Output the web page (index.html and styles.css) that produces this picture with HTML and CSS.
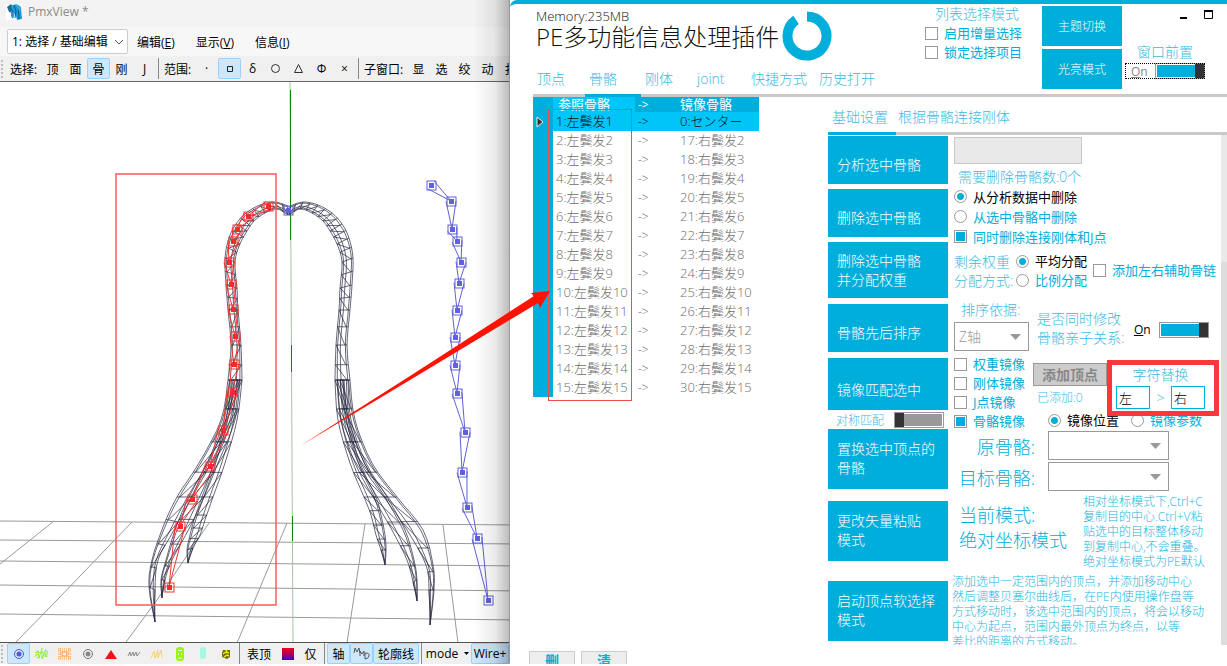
FILE: index.html
```html
<!DOCTYPE html>
<html lang="zh-CN">
<head>
<meta charset="utf-8">
<title>PmxView</title>
<link rel="stylesheet" href="styles.css">
</head>
<body>
<div class="desktop">
  <section class="viewer">
    <header class="titlebar">
      <svg class="app-icon" width="16" height="16" viewBox="0 0 16 16"><rect width="16" height="16" fill="#fff"/><path d="M1 3L5 0 8 4 6 9 3 8z" fill="#1b6f94"/><path d="M5 2Q11-2 15 3L16 15 11 16 9 9 7 15 5 12z" fill="#1c9ad6"/><path d="M8 1L10 7 9 14M12 2L13 15M4 3L7 8" stroke="#135a86" fill="none"/><path d="M10 1Q13 1 14 4L14 8z" fill="#46b5e8"/></svg>
      <span>PmxView *</span>
    </header>
    <nav class="menubar">
      <label class="mode-pick">
        <select aria-label="模式"><option>1: 选择 / 基础编辑</option></select>
        <svg width="10" height="6" viewBox="0 0 10 6"><path d="M1 1L5 5 9 1" fill="none" stroke="#555"/></svg>
      </label>
      <button>编辑(<u>E</u>)</button>
      <button>显示(<u>V</u>)</button>
      <button>信息(<u>I</u>)</button>
    </nav>
    <div class="toolbar tools-top">
      <i class="grip"></i>
      <span class="tool-label">选择:</span>
      <button>顶</button><button>面</button><button class="on">骨</button><button>刚</button><button>J</button>
      <i class="sep"></i>
      <span class="tool-label">范围:</span>
      <button>·</button>
      <button class="on" aria-label="矩形"><svg width="8" height="8"><path d="M1.500 1.500H6.500V6.500H1.500z" fill="none" stroke="#222"/></svg></button>
      <button>δ</button>
      <button aria-label="圆形"><svg width="11" height="11"><circle cx="5.500" cy="5.500" r="4" fill="none" stroke="#333"/></svg></button>
      <button aria-label="三角形"><svg width="11" height="11"><path d="M5.500 1.500L9.500 9.500H1.500z" fill="none" stroke="#333"/></svg></button>
      <button>Φ</button><button>×</button>
      <i class="sep"></i>
      <span class="tool-label wide">子窗口:</span>
      <button>显</button><button>选</button><button>绞</button><button>动</button><button>扌</button>
    </div>
    <div class="stage">
      <svg class="scene" width="100%" height="100%" aria-label="模型视图">
        <g transform="translate(0 -82)">
          <g class="grid-lines">
            <path d="M0 521L520 525M0 540L520 544M0 561L520 566M0 585L520 591M0 614L520 620"/>
            <path d="M54 521L-60 612M132 522L57 600 16 642M209 523L157 600 126 642M287 523L237 643M365 524L347 643M443 525L458 643"/>
          </g>
          <path class="axis" d="M290 82L293 643"/>
          <path class="axis-strong" d="M290.500 90V240M291.500 345V372M292.500 516V541"/>
          <g id="mesh" class="mesh"></g>
          <g id="bones-left" class="bones red"></g>
          <g id="bones-right" class="bones blue"></g>
          <rect class="lasso" x="116" y="174" width="160" height="431"/>
        </g>
      </svg>
    </div>
    <div class="toolbar tools-bottom">
      <i class="grip"></i>
      <button class="on" aria-label="骨骼"><svg width="12" height="12"><circle cx="6" cy="6" r="4.500" fill="none" stroke="#5558d8"/><circle cx="6" cy="6" r="2.500" fill="#5558d8"/></svg></button>
      <button aria-label="顶点"><svg width="15" height="13"><path d="M1 10L4 3 5 11 8 1 8 12 12 2 11 10 14 4M1 5L14 7M2 8L13 4M3 11L14 9" stroke="#8df02c" stroke-dasharray="3 1" fill="none"/></svg></button>
      <button aria-label="面"><svg width="15" height="14"><path d="M1 2H14M1 4H14M1 7H5M9 7H14M1 10H14M1 12H14M3 1V13M12 1V13" stroke="#ff9a3a" stroke-dasharray="1 1" fill="none"/><rect x="5" y="5" width="5" height="4" fill="none" stroke="#ff9a3a"/></svg></button>
      <button aria-label="中心"><svg width="12" height="12"><circle cx="6" cy="6" r="4.500" fill="none" stroke="#777"/><circle cx="6" cy="6" r="2.500" fill="#888"/></svg></button>
      <button aria-label="三角"><svg width="12" height="12"><path d="M6 2L12 11H0z" fill="#f31212"/></svg></button>
      <button aria-label="法线"><svg width="14" height="8"><path d="M1 6L3 2 4 6 6 2 7 6 9 2 10 6 13 2" stroke="#8a8a8a" fill="none"/></svg></button>
      <button aria-label="边线"><svg width="14" height="10"><path d="M1 9L4 2 5 9 8 1 8 9 11 1 12 9" stroke="#ffce70" fill="none"/></svg></button>
      <button aria-label="刚体"><svg width="8" height="14"><rect width="8" height="14" rx="3" fill="#9cf50f"/><path d="M2 3.500H6M2.500 6V8M5.500 6V8M2 11H6" stroke="#effdd5"/></svg></button>
      <button aria-label="胶囊"><svg width="7" height="13"><rect x="1" width="6" height="12" rx="3" fill="#a5f8e2"/></svg></button>
      <button aria-label="J点"><svg width="10" height="10"><path d="M2 1H9V8L6 10 1 8V4z" fill="#736f00"/><path d="M2 5L5 3 8 4M3 8L6 6 8 7M5 1L6 3" stroke="#f1e72b" stroke-width="1.500" fill="none"/></svg></button>
      <i class="sep"></i>
      <button class="w-text">表顶</button>
      <button aria-label="颜色"><svg width="12" height="12"><defs><linearGradient id="rb" x2="0" y2="1"><stop stop-color="#f00020"/><stop offset=".5" stop-color="#b00050"/><stop offset="1" stop-color="#3500d8"/></linearGradient></defs><rect width="12" height="12" fill="url(#rb)"/></svg></button>
      <button>仅</button>
      <i class="sep"></i>
      <button class="on">轴</button>
      <button class="on" aria-label="MMD"><svg width="18" height="14"><path d="M1 6L2 1 4 5 6 1 7 6M7 9V4L9 7 11 4V9M12 12V6Q17 6 16 9T12 12z" stroke="#555" fill="none"/></svg></button>
      <button class="on w-text">轮廓线</button>
      <i class="sep"></i>
      <button class="w-mode">mode <svg width="5" height="3"><path d="M0 0H5L2.500 3z"/></svg></button>
      <button class="on w-wire">Wire+</button>
    </div>
  </section>

  <section class="plugin">
    <header class="head">
      <div class="head-main">
        <div class="brand">
          <div>
            <div class="memory">Memory:235MB</div>
            <h1>PE多功能信息处理插件</h1>
          </div>
          <svg class="ring" width="50" height="50" viewBox="0 0 50 50"><path d="M25 5.500A19.500 19.500 0 1 1 14.100 8.800" fill="none" stroke="#00aedb" stroke-width="10"/></svg>
        </div>
        <nav class="tabs">
          <a href="#v">顶点</a><a href="#b" class="active">骨骼</a><a href="#r">刚体</a><a href="#j">joint</a><a href="#q">快捷方式</a><a href="#h">历史打开</a>
        </nav>
      </div>
      <fieldset class="list-mode">
        <legend>列表选择模式</legend>
        <label><input type="checkbox">启用增量选择</label>
        <label><input type="checkbox">锁定选择项目</label>
      </fieldset>
      <div class="theme-buttons">
        <button>主题切换</button>
        <button>光亮模式</button>
      </div>
      <div class="window-side">
        <div class="window-buttons">
          <button aria-label="最小化"><svg width="9" height="10"><path d="M1 8H8" stroke="#000" stroke-width="2"/></svg></button>
          <button aria-label="最大化"><svg width="11" height="10"><path d="M1.500 1V8.500H9.500V1" fill="none" stroke="#000"/><path d="M1 1H10" stroke="#000" stroke-width="2"/></svg></button>
        </div>
        <div class="front-label">窗口前置</div>
        <label class="front-switch"><span><u>O</u>n</span><input type="checkbox" class="switch" checked></label>
      </div>
    </header>

    <div class="work">
      <div class="list-side">
        <div class="bone-frame">
          <table class="bone-table">
            <thead><tr><th></th><th class="sorted">参照骨骼</th><th class="arrow">-&gt;</th><th>镜像骨骼</th></tr></thead>
            <tbody>
              <tr class="current"><th><svg width="8" height="12"><path d="M1 1L7 6 1 11z" fill="#333" stroke="#eee"/></svg></th><td>1:左鬓发1</td><td class="arrow">-&gt;</td><td>0:センター</td></tr>
              <tr><th></th><td>2:左鬓发2</td><td class="arrow">-&gt;</td><td>17:右鬓发2</td></tr>
              <tr><th></th><td>3:左鬓发3</td><td class="arrow">-&gt;</td><td>18:右鬓发3</td></tr>
              <tr><th></th><td>4:左鬓发4</td><td class="arrow">-&gt;</td><td>19:右鬓发4</td></tr>
              <tr><th></th><td>5:左鬓发5</td><td class="arrow">-&gt;</td><td>20:右鬓发5</td></tr>
              <tr><th></th><td>6:左鬓发6</td><td class="arrow">-&gt;</td><td>21:右鬓发6</td></tr>
              <tr><th></th><td>7:左鬓发7</td><td class="arrow">-&gt;</td><td>22:右鬓发7</td></tr>
              <tr><th></th><td>8:左鬓发8</td><td class="arrow">-&gt;</td><td>23:右鬓发8</td></tr>
              <tr><th></th><td>9:左鬓发9</td><td class="arrow">-&gt;</td><td>24:右鬓发9</td></tr>
              <tr><th></th><td>10:左鬓发10</td><td class="arrow">-&gt;</td><td>25:右鬓发10</td></tr>
              <tr><th></th><td>11:左鬓发11</td><td class="arrow">-&gt;</td><td>26:右鬓发11</td></tr>
              <tr><th></th><td>12:左鬓发12</td><td class="arrow">-&gt;</td><td>27:右鬓发12</td></tr>
              <tr><th></th><td>13:左鬓发13</td><td class="arrow">-&gt;</td><td>28:右鬓发13</td></tr>
              <tr><th></th><td>14:左鬓发14</td><td class="arrow">-&gt;</td><td>29:右鬓发14</td></tr>
              <tr><th></th><td>15:左鬓发15</td><td class="arrow">-&gt;</td><td>30:右鬓发15</td></tr>
            </tbody>
          </table>
        </div>
        <div class="list-actions"><button>删</button><button>清</button></div>
      </div>

      <div class="settings">
        <nav class="sub-tabs"><a href="#base" class="active">基础设置</a><a href="#link">根据骨骼连接刚体</a></nav>
        <div class="pane">
          <div class="commands">
            <button class="single">分析选中骨骼</button>
            <button class="single">删除选中骨骼</button>
            <button class="mid">删除选中骨骼<br>并分配权重</button>
            <button class="single sort">骨骼先后排序</button>
            <button class="single match">镜像匹配选中</button>
            <label class="sym">对称匹配<input type="checkbox" class="switch"></label>
            <button class="tall">置换选中顶点的<br>骨骼</button>
            <button class="tall paste">更改矢量粘贴<br>模式</button>
            <button class="tall soft">启动顶点软选择<br>模式</button>
          </div>
          <div class="options">
            <input class="result" aria-label="分析结果" disabled>
            <div class="need">需要删除骨骼数:0个</div>
            <label class="opt"><input type="radio" name="src" checked>从分析数据中删除</label>
            <label class="opt"><input type="radio" name="src">从选中骨骼中删除</label>
            <label class="opt"><input type="checkbox" checked>同时删除连接刚体和J点</label>

            <div class="weights">
              <div class="two-line">剩余权重<br>分配方式:</div>
              <div class="radio-col">
                <label><input type="radio" name="w" checked>平均分配</label>
                <label><input type="radio" name="w">比例分配</label>
              </div>
              <label class="aux"><input type="checkbox">添加左右辅助骨链</label>
            </div>

            <div class="sorting">
              <div class="sort-by">
                <label for="axis">排序依据:</label>
                <span class="drop"><select id="axis"><option>Z轴</option></select><svg width="11" height="6"><path d="M0 0H11L5.500 6z" fill="#999"/></svg></span>
              </div>
              <div class="two-line">是否同时修改<br>骨骼亲子关系:</div>
              <label class="parent-switch"><span><u>O</u>n</span><input type="checkbox" class="switch" checked></label>
            </div>

            <div class="mirror">
              <div class="mirror-checks">
                <label><input type="checkbox">权重镜像</label>
                <label><input type="checkbox">刚体镜像</label>
                <label><input type="checkbox">J点镜像</label>
                <label><input type="checkbox" checked>骨骼镜像</label>
              </div>
              <div class="mirror-main">
                <div class="mirror-top">
                  <div class="add-vertex"><button>添加顶点</button><span>已添加:0</span></div>
                  <div class="replace">
                    <div>字符替换</div>
                    <div class="replace-row"><input aria-label="原字符" value="左"><span>&gt;</span><input aria-label="新字符" value="右"></div>
                  </div>
                </div>
                <div class="mirror-radios">
                  <label><input type="radio" name="m" checked>镜像位置</label>
                  <label><input type="radio" name="m">镜像参数</label>
                </div>
              </div>
            </div>

            <div class="bone-picks">
              <label for="from">原骨骼:</label>
              <span class="drop"><select id="from"><option></option></select><svg width="11" height="6"><path d="M0 0H11L5.500 6z" fill="#999"/></svg></span>
              <label for="to">目标骨骼:</label>
              <span class="drop"><select id="to"><option></option></select><svg width="11" height="6"><path d="M0 0H11L5.500 6z" fill="#999"/></svg></span>
            </div>

            <div class="paste-mode">
              <div class="mode-name">当前模式:<br>绝对坐标模式</div>
              <p>相对坐标模式下,Ctrl+C<br>复制目的中心.Ctrl+V粘<br>贴选中的目标整体移动<br>到复制中心,不会重叠。<br>绝对坐标模式为PE默认</p>
            </div>
            <p class="soft-help">添加选中一定范围内的顶点，并添加移动中心<br>然后调整贝塞尔曲线后，在PE内使用操作盘等<br>方式移动时，该选中范围内的顶点，将会以移动<br>中心为起点，范围内最外顶点为终点，以等<br>差比的距离的方式移动。</p>
          </div>
          <div class="scrollbar"></div>
        </div>
      </div>
    </div>
  </section>

  <svg class="pointer" width="260" height="170" viewBox="0 0 260 170" aria-hidden="true"><path d="M2 156L112 86 236 6 233 3 252 1 242 18 240 13 112 90z" fill="#ff1200"/></svg>
</div>
<script src="scene.js"></script>
</body>
</html>
```

FILE: styles.css
```css
* { box-sizing: border-box; }

:root {
  --blue: #00aedb;
  --soft: #3dbae0;
}

html, body { margin: 0; height: 100%; }

body {
  padding-bottom: 2px;
  background: #fff;
  overflow: hidden;
  font-family: "Open Sans", "Noto Sans CJK SC", sans-serif;
  font-size: 13px;
  font-weight: 300;
  color: #000;
}

button, input, select { font: inherit; color: inherit; margin: 0; }
button { padding: 0; border: 0; background: none; white-space: nowrap; }
a { color: inherit; text-decoration: none; }
select { appearance: none; }
svg { display: block; flex: none; }

.desktop {
  position: relative;
  display: grid;
  grid-template-columns: minmax(0, 510fr) minmax(0, 717fr);
  height: 100%;
  overflow: hidden;
}

/* model viewer */
.viewer {
  position: relative;
  display: flex;
  flex-direction: column;
  min-height: 0;
  overflow: hidden;
  background: #f0f0f0;
  font-size: 12px;
  font-weight: 400;
}
.viewer::after {
  content: "";
  position: absolute;
  inset: 0 0 0 auto;
  width: 36px;
  background: linear-gradient(90deg, transparent, rgba(0, 0, 0, .08) 60%, rgba(0, 0, 0, .26));
  border-right: 1px solid #999;
  pointer-events: none;
}
.titlebar {
  display: flex;
  align-items: center;
  gap: 6px;
  height: 27px;
  padding: 0 6px 4px;
  background: #f3f3f3;
  color: #8a8a8a;
}
.menubar {
  display: flex;
  align-items: center;
  height: 29px;
  padding: 0 0 0 7px;
  gap: 21px;
  background: #f7f7f7;
}
.mode-pick { display: grid; align-items: center; margin-right: -12px; }
.mode-pick select {
  grid-area: 1 / 1;
  width: 121px;
  height: 25px;
  padding: 0 4px;
  border: 1px solid #ccc;
  border-radius: 2px;
  background: #fff;
}
.mode-pick svg { grid-area: 1 / 1; justify-self: end; margin-right: 4px; }

.toolbar { display: flex; align-items: center; flex: none; overflow: hidden; white-space: nowrap; }
.toolbar > * { flex: none; }
.tools-top { height: 26px; border-bottom: 1px solid #666; }
.tools-bottom { height: 22px; border-top: 1px solid #555; }
.toolbar button {
  display: flex;
  align-items: center;
  justify-content: center;
  width: 23px;
  height: 21px;
  border: 1px solid transparent;
  border-radius: 2px;
}
.toolbar .on { background: #cce8ff; border-color: #99d1ff; }
.grip { width: 3px; height: 18px; margin: 0 3px 0 1px; border-left: 2px dotted #bbb; }
.sep { width: 1px; height: 21px; margin: 0 2px; background: #888; }
.tool-label { width: 34px; padding-left: 3px; }
.tool-label.wide { width: 46px; }
.toolbar .w-text { width: auto; padding: 0 4px; }
.toolbar .w-mode { width: 47px; gap: 6px; }
.toolbar .w-wire { width: 38px; }

.stage { flex: 1; min-height: 0; background: #fff; overflow: hidden; }
.grid-lines { fill: none; stroke: #999; }
.axis { fill: none; stroke: #a4c3a4; }
.axis-strong { fill: none; stroke: #0a840a; }
.mesh { fill: none; stroke: #25263f; stroke-width: .7; }
.bones { fill: none; }
.red { stroke: #fa3030; --node: #fa2a2a; }
.blue { stroke: #6060d8; --node: #6060e0; }
.bones .node { fill: var(--node); stroke: none; }
.lasso { fill: none; stroke: #ff5a5a; stroke-width: 1.5; }

/* plugin window */
.plugin {
  display: flex;
  flex-direction: column;
  min-height: 0;
  padding-left: 23px;
  border-top: 4px solid var(--blue);
  border-top-left-radius: 7px;
  background: #fff;
}
.head {
  display: flex;
  flex: none;
  height: 93px;
  border-bottom: 3px solid #c9c9c9;
  color: var(--blue);
}
.head-main { flex: 1; display: flex; flex-direction: column; justify-content: space-between; margin-bottom: -3px; min-width: 0; }
.brand { display: flex; gap: 3px; padding: 4px 0 0 3px; color: #111; }
.memory { line-height: 16px; font-size: 13px; }
h1 { margin: 0; font-size: 24px; font-weight: 300; line-height: 26px; white-space: nowrap; }
.ring { margin-top: 3px; }
.tabs {
  display: grid;
  grid-template-columns: 52px 56px 52px 54px 68px 60px;
  font-size: 14px;
  line-height: 24px;
  color: var(--soft);
}
.tabs a { padding: 0 0 3px 4px; border-bottom: 3px solid transparent; }
.tabs .active { border-color: var(--blue); }

.list-mode { flex: 0 0 117px; margin: 0; padding: 0; border: 0; min-width: 0; }
.list-mode legend { padding: 0 0 0 10px; font-size: 14px; line-height: 20px; color: var(--soft); }
label { white-space: nowrap; }
.list-mode label, .opt, .radio-col label, .aux, .mirror label {
  display: flex;
  align-items: center;
  gap: 6px;
  font-weight: 400;
}
.list-mode label { line-height: 19px; }

input[type="checkbox"], input[type="radio"] {
  appearance: none;
  flex: none;
  width: 13px;
  height: 13px;
  padding: 1px;
  border: 1px solid #999;
  background: #fff;
}
input[type="checkbox"]:checked { background: linear-gradient(var(--blue), var(--blue)) content-box; }
input[type="radio"] { border-radius: 50%; }
input[type="radio"]:checked { background: radial-gradient(var(--blue) 3px, #fff 4px); }
label:has(input[type="radio"]:checked) { color: #000; }

input.switch[type="checkbox"] {
  width: 50px;
  height: 16px;
  padding: 1px;
  background:
    linear-gradient(#333, #333) left / 10px 100% no-repeat border-box,
    linear-gradient(#999, #999) content-box;
}
input.switch[type="checkbox"]:checked {
  background:
    linear-gradient(#333, #333) right / 10px 100% no-repeat border-box,
    linear-gradient(var(--blue), var(--blue)) content-box;
}

.theme-buttons { flex: 0 0 80px; display: grid; grid-auto-rows: 40px; gap: 3px; padding-top: 2px; }
.theme-buttons button, .commands button { background: var(--blue); color: #fff; }
.theme-buttons button { font-size: 12px; }
.window-side { flex: 0 0 105px; }
.window-buttons { display: flex; justify-content: flex-end; gap: 15px; padding: 6px 13px 0 0; }
.front-label { padding: 21px 0 0 15px; font-size: 14px; line-height: 22px; color: var(--soft); }
.front-switch {
  display: flex;
  align-items: center;
  justify-content: space-between;
  width: 80px;
  height: 16px;
  margin-left: 3px;
  padding-left: 6px;
  outline: 1px dotted #000;
  outline-offset: -1px;
  color: #888;
  font-size: 12px;
  font-weight: 400;
}

.work { flex: 1; display: flex; min-height: 0; }
.list-side { flex: 1; display: flex; flex-direction: column; justify-content: space-between; min-width: 0; }
.bone-frame { position: relative; align-self: flex-start; }
.bone-frame::after {
  content: "";
  position: absolute;
  left: 15px;
  top: 12px;
  width: 84px;
  height: 292px;
  border: 1px solid #f34c4c;
  box-sizing: border-box;
}
.bone-table { border-collapse: collapse; line-height: 15px; color: #6c6c6c; }
.bone-table th, .bone-table td { height: 19px; padding: 0 0 0 3px; font-weight: 300; text-align: left; white-space: nowrap; }
.bone-table thead th { height: 15px; background: var(--blue); color: #fff; font-weight: 400; }
.bone-table th:first-child { width: 20px; background: var(--blue); }
.bone-table th:nth-child(2) { width: 82px; padding-left: 5px; }
.bone-table .arrow { width: 42px; font-size: 12px; }
.bone-table .sorted, .bone-table .current td { background: #00c5f9; }
.bone-table .current td { color: #111; }
.bone-table :is(td, th):last-child { width: 82px; }
.list-actions { display: flex; gap: 6px; height: 13px; margin-left: -4px; overflow: hidden; }
.list-actions button {
  width: 46px;
  height: 20px;
  border: 1px solid #ccc;
  background: #eee;
  color: var(--blue);
  font-size: 14px;
  line-height: 14px;
  font-weight: 700;
}

/* settings */
.settings { flex: 0 0 399px; display: flex; flex-direction: column; min-height: 0; padding-bottom: 19px; }
.sub-tabs {
  display: flex;
  flex: none;
  border-bottom: 3px solid #c9c9c9;
  font-size: 14px;
  line-height: 23px;
  padding-top: 8px;
  color: var(--soft);
}
.sub-tabs a { margin-bottom: -3px; padding: 0 2px 4px; border-bottom: 3px solid transparent; white-space: nowrap; }
.sub-tabs .active { padding: 0 8px 4px 4px; border-color: var(--blue); }
.pane { flex: 1; display: flex; min-height: 0; overflow: hidden; color: var(--blue); }
.scrollbar { flex: 0 0 6px; background: linear-gradient(#e9e9e9 127px, #ddd 127px); }

.commands { flex: 0 0 120px; display: flex; flex-direction: column; gap: 5px; padding-top: 1px; }
.commands button { flex: none; height: 48px; padding: 0 9px 2px; font-size: 14px; line-height: 19px; text-align: left; }
.commands .single { padding-top: 10px; }
.commands .mid { height: 56px; padding-bottom: 0; }
.commands .sort { margin: 1px 0; }
.commands .match { height: 52px; padding-bottom: 0; }
.sym { display: flex; justify-content: space-between; align-items: center; height: 16px; margin: -3px 4px -4px 8px; font-size: 12px; color: var(--soft); }
.commands .tall { height: 60px; }
.commands .paste { margin: 7px 0 15px; }

.options { flex: 1; min-width: 0; padding: 2px 0 0 6px; }
.result { display: block; width: 128px; height: 27px; border: 1px solid #c8c8c8; background: #e9e9e9; }
.need { padding: 3px 0 0 4px; font-size: 14px; line-height: 19px; color: var(--soft); }
.opt { height: 20px; }
.weights { display: flex; align-items: center; margin-top: 6px; }
.two-line { font-size: 14px; line-height: 19px; color: var(--soft); white-space: nowrap; }
.weights .two-line { width: 62px; }
.radio-col { width: 77px; line-height: 19px; }
.aux { align-self: flex-start; padding-top: 9px; line-height: 19px; }
.sorting { display: flex; margin-top: 9px; }
.sort-by { width: 83px; }
.sort-by > label { display: block; padding-left: 7px; font-size: 14px; line-height: 22px; color: var(--soft); }
.sort-by .drop { margin-top: 1px; }
.sorting .two-line { width: 97px; padding-top: 10px; }
.parent-switch { display: flex; align-items: center; gap: 8px; padding-top: 9px; color: #000; font-size: 12px; font-weight: 400; }
.drop { display: grid; align-items: center; }
.drop select { grid-area: 1 / 1; height: 29px; width: 100%; padding: 0 4px; border: 1px solid #999; border-radius: 0; background: #fff; }
.drop svg { grid-area: 1 / 1; justify-self: end; margin-right: 8px; }
.sort-by .drop { width: 75px; color: #999; font-size: 14px; }

.mirror { display: flex; margin-top: 4px; }
.mirror-checks { flex: 0 0 79px; line-height: 19px; }
.mirror-main { flex: 1; }
.mirror-top { display: flex; height: 56px; }
.add-vertex { flex: 0 0 74px; padding-top: 8px; font-size: 12px; line-height: 24px; color: var(--soft); }
.add-vertex button { display: block; width: 74px; height: 23px; border: 1px solid #999; background: #ccc; color: #888; font-size: 14px; font-weight: 700; line-height: 20px; }
.add-vertex span { padding-left: 4px; }
.replace {
  position: relative;
  width: 112px;
  margin-top: 5px;
  padding: 4px 14px 0 9px;
  text-align: center;
  font-size: 14px;
  line-height: 22px;
  color: var(--soft);
}
.replace::after { content: ""; position: absolute; inset: 0 0 -5px; border: 5px solid #fc3739; pointer-events: none; }
.replace-row { display: flex; align-items: center; justify-content: space-between; }
.replace-row input { width: 34px; height: 23px; padding: 0 2px; border: 1px solid var(--blue); color: #000; font-size: 13px; }
.mirror-radios { display: flex; gap: 12px; padding-left: 15px; line-height: 19px; }

.bone-picks {
  display: grid;
  grid-template-columns: 81px 121px;
  gap: 2px 13px;
  align-items: center;
  text-align: right;
  font-size: 18px;
}
.paste-mode { display: flex; }
.mode-name { width: 129px; padding: 12px 0 0 5px; font-size: 18px; line-height: 25px; white-space: nowrap; }
p { margin: 0; font-size: 12px; line-height: 15px; white-space: nowrap; }
.paste-mode p { padding-top: 3px; }
.soft-help { margin: 5px 0 0 -2px; }
.paste-mode p, .soft-help { color: #22b6de; }

.pointer { position: absolute; left: 298px; top: 290px; pointer-events: none; }
```

FILE: scene.js
```js
const NS = "http://www.w3.org/2000/svg";

function add(parent, tag, attrs) {
  const el = document.createElementNS(NS, tag);
  for (const key in attrs) el.setAttribute(key, attrs[key]);
  parent.appendChild(el);
}

// Each station is [outerX, outerY, innerX, innerY].
const arch = [
  [288, 206, 288, 215], [275, 202, 277, 209], [260, 205, 265, 213],
  [246, 213, 254, 221], [236, 224, 247, 231], [229, 238, 240, 244],
  [225, 258, 235, 262], [226, 285, 237, 288], [228, 310, 238, 310],
  [231, 345, 241, 345], [228, 380, 242, 380]
];
const leftTails = [
  [[228, 380, 238, 380], [221, 420, 230, 420], [199, 463, 211, 463], [177, 497, 192, 497], [163, 527, 174, 530], [152, 560, 158, 560], [149, 587, 155, 590], [155, 622, 155, 622]],
  [[230, 380, 240, 380], [224, 420, 235, 420], [207, 463, 218, 463], [189, 497, 204, 497], [176, 527, 190, 527], [166, 560, 172, 560], [161, 580, 165, 580], [162, 598, 162, 598]],
  [[233, 380, 242, 380], [226, 420, 237, 420], [214, 463, 225, 463], [202, 497, 213, 497], [194, 520, 205, 520], [190, 535, 200, 535], [187, 550, 193, 548], [188, 563, 188, 563]]
];
const rightTails = [
  [[350, 380, 340, 380], [355, 420, 346, 420], [372, 463, 361, 463], [397, 497, 384, 497], [423, 530, 407, 530], [433, 565, 426, 565], [434, 590, 429, 590], [430, 625, 430, 625]],
  [[348, 380, 337, 380], [351, 420, 341, 420], [366, 463, 355, 463], [387, 497, 373, 497], [405, 530, 392, 530], [414, 560, 407, 560], [417, 580, 413, 582], [417, 601, 417, 601]],
  [[344, 380, 335, 380], [348, 420, 338, 420], [360, 463, 350, 463], [376, 497, 364, 497], [381, 515, 371, 515], [385, 535, 376, 535], [386, 550, 381, 550], [385, 565, 385, 565]]
];

// Catmull-Rom subdivision of the stations.
function smooth(points, steps) {
  const out = [];
  for (let i = 0; i < points.length - 1; i++) {
    const a = points[Math.max(0, i - 1)], b = points[i], c = points[i + 1];
    const d = points[Math.min(points.length - 1, i + 2)];
    for (let s = 0; s < steps; s++) {
      const t = s / steps;
      out.push(b.map((_, k) => 0.5 * (2 * b[k] + (c[k] - a[k]) * t +
        (2 * a[k] - 5 * b[k] + 4 * c[k] - d[k]) * t * t +
        (3 * b[k] - a[k] - 3 * c[k] + d[k]) * t * t * t)));
    }
  }
  out.push(points[points.length - 1]);
  return out;
}

const at = (p, t) => (p[0] + (p[2] - p[0]) * t).toFixed(1) + " " + (p[1] + (p[3] - p[1]) * t).toFixed(1);

function strand(points, step, rails) {
  const mesh = document.getElementById("mesh");
  const rows = smooth(points, 4);
  let d = "";
  for (const t of rails) d += "M" + rows.map(p => at(p, t)).join("L");
  for (let i = 0; i < rows.length; i += step) {
    d += "M" + at(rows[i], 0) + "L" + at(rows[i], 1);
    const next = rows[i + step];
    if (next) d += "M" + at(rows[i], 1) + "L" + at(next, 0.2);
  }
  add(mesh, "path", { d });
}

const mirrored = arch.map(p => [578 - p[0], p[1], 577 - p[2], p[3]]);
strand(arch, 2, [0, 0.15, 0.6, 0.85, 1]);
strand(mirrored, 2, [0, 0.15, 0.6, 0.85, 1]);
for (const tail of leftTails) strand(tail, 3, [0, 0.15, 0.7, 1]);
for (const tail of rightTails) strand(tail, 3, [0, 0.15, 0.7, 1]);

function bones(id, nodes) {
  const group = document.getElementById(id);
  nodes.forEach(([x, y], i) => {
    const next = nodes[i + 1];
    if (next) {
      const len = Math.hypot(next[0] - x, next[1] - y);
      const nx = -(next[1] - y) / len * 5, ny = (next[0] - x) / len * 5;
      add(group, "path", { d: `M${x + nx} ${y + ny}L${next[0]} ${next[1]}L${x - nx} ${y - ny}` });
    }
    add(group, "rect", { x: x - 4, y: y - 4, width: 9, height: 9 });
    add(group, "rect", { x: x - 2, y: y - 2, width: 5, height: 5, class: "node" });
  });
}

bones("bones-left", [[268, 206], [248, 216], [237, 229], [233, 241], [229, 262], [231, 284], [233, 309], [235, 336], [234, 364], [232, 392], [223, 430], [210, 466], [192, 499], [180, 526], [169, 587]]);
bones("bones-right", [[431, 185], [451, 201], [452, 229], [457, 241], [461, 262], [459, 283], [457, 310], [455, 337], [455, 365], [457, 393], [465, 432], [462, 472], [467, 507], [477, 538], [488, 600]]);
bones("bones-right", [[288, 210]]);
```
